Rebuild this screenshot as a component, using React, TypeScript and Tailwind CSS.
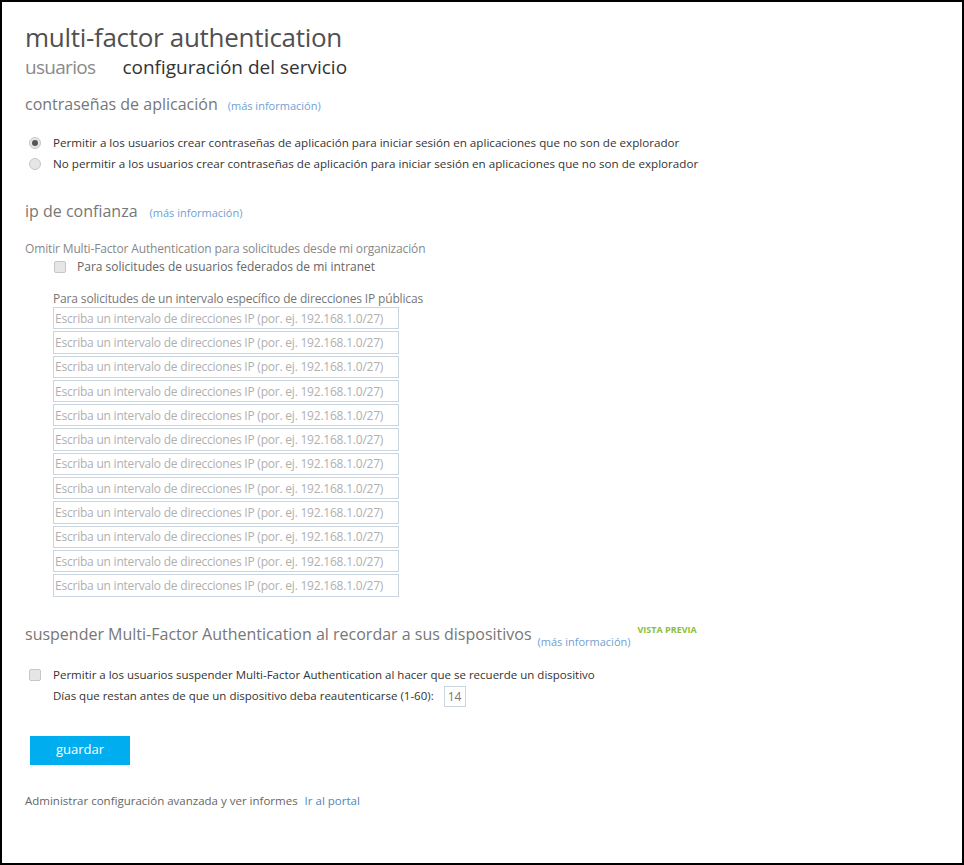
import React from "react";

const placeholder = "Escriba un intervalo de direcciones IP (por. ej. 192.168.1.0/27)";

function MoreInfo() {
  return <a className="text-[11px] text-[#6f9fd4] cursor-pointer">(más información)</a>;
}

function Radio({ checked }: { checked?: boolean }) {
  return (
    <span className="w-[12px] h-[12px] rounded-full border border-[#c6c6c6] bg-[#e6e6e6] flex items-center justify-center shrink-0">
      {checked && <span className="w-[6px] h-[6px] rounded-full bg-[#555]" />}
    </span>
  );
}

function Check() {
  return <span className="w-[12px] h-[12px] rounded-[2px] border border-[#c6c6c6] bg-[#e6e6e6] shrink-0" />;
}

export default function App() {
  return (
    <div className="w-[964px] h-[865px] border-2 border-black bg-white font-['Open_Sans',sans-serif] text-[#444]">
      <div className="pl-[23px] pt-[20px]">
        <h1 className="text-[26px] leading-[30px] tracking-[-0.3px] text-[#505050] font-normal">multi-factor authentication</h1>
        <div className="flex gap-[27px] text-[19px] leading-[26px] mt-[2px]">
          <span className="text-[#8a8a8a] tracking-[-0.7px]">usuarios</span>
          <span className="text-[#333]">configuración del servicio</span>
        </div>

        <div className="flex items-baseline gap-[10px] mt-[13px]">
          <h2 className="text-[16px] leading-[22px] text-[#777]">contraseñas de aplicación</h2>
          <MoreInfo />
        </div>

        <div className="mt-[20px] flex flex-col gap-[5px] text-[11.65px] text-[#333]">
          <label className="flex items-center gap-[12px] pl-[4px] h-[16px]">
            <Radio checked />
            <span>Permitir a los usuarios crear contraseñas de aplicación para iniciar sesión en aplicaciones que no son de explorador</span>
          </label>
          <label className="flex items-center gap-[12px] pl-[4px] h-[16px]">
            <Radio />
            <span>No permitir a los usuarios crear contraseñas de aplicación para iniciar sesión en aplicaciones que no son de explorador</span>
          </label>
        </div>

        <div className="flex items-baseline gap-[12px] mt-[28px]">
          <h2 className="text-[16px] leading-[22px] text-[#777]">ip de confianza</h2>
          <MoreInfo />
        </div>

        <div className="mt-[18px] text-[12px] leading-[17px] tracking-[-0.15px] text-[#888]">
          Omitir Multi-Factor Authentication para solicitudes desde mi organización
        </div>
        <label className="flex items-center gap-[11px] pl-[29px] h-[20px] text-[12px] text-[#666]">
          <Check />
          <span>Para solicitudes de usuarios federados de mi intranet</span>
        </label>

        <div className="pl-[28px] mt-[13px]">
          <div className="text-[12px] leading-[17px] tracking-[-0.15px] text-[#777]">
            Para solicitudes de un intervalo específico de direcciones IP públicas
          </div>
          <div className="flex flex-col gap-[2px]">
            {Array.from({ length: 12 }).map((_, i) => (
              <input
                key={i}
                placeholder={placeholder}
                className="w-[346px] h-[22.3px] border border-[#c9d6e2] px-[1px] text-[12px] tracking-[-0.22px] placeholder:text-[#b0b0b0] outline-none"
              />
            ))}
          </div>
        </div>

        <div className="flex items-start mt-[26px]">
          <h2 className="text-[16px] leading-[22px] text-[#777]">suspender Multi-Factor Authentication al recordar a sus dispositivos</h2>
          <span className="ml-[6px] mt-[5px]"><MoreInfo /></span>
          <span className="ml-[7px] text-[9px] font-bold text-[#8cbd3b]">VISTA PREVIA</span>
        </div>

        <div className="mt-[14px] text-[11.5px] text-[#333]">
          <label className="flex items-center gap-[12px] pl-[4px] h-[18px]">
            <Check />
            <span>Permitir a los usuarios suspender Multi-Factor Authentication al hacer que se recuerde un dispositivo</span>
          </label>
          <div className="flex items-center pl-[28px] mt-[2px]">
            <span>Días que restan antes de que un dispositivo deba reautenticarse (1-60):</span>
            <input
              defaultValue="14"
              className="ml-[10px] w-[22px] h-[21px] border border-[#c9d6e2] text-[12px] text-[#777] px-[3px] outline-none"
            />
          </div>
        </div>

        <button className="mt-[29px] ml-[5px] w-[100px] h-[29px] bg-[#00aeef] text-white text-[13px]">guardar</button>

        <div className="mt-[27px] text-[11.5px] text-[#666]">
          Administrar configuración avanzada y ver informes <a className="ml-[4px] text-[#4f86bd] cursor-pointer">Ir al portal</a>
        </div>
      </div>
    </div>
  );
}
